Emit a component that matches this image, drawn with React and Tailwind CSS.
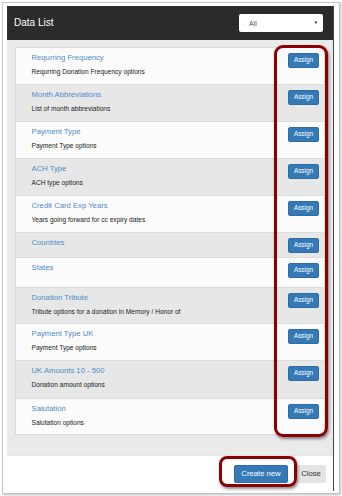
import React from "react";

const rows = [
  { t: "Requrring Frequency", d: "Requrring Donation Frequency options", h: "h-[37px]" },
  { t: "Month Abbreviations", d: "List of month abbreviations", h: "h-[37px]" },
  { t: "Payment Type", d: "Payment Type options", h: "h-[37px]" },
  { t: "ACH Type", d: "ACH type options", h: "h-[37px]" },
  { t: "Credit Card Exp Years", d: "Years going forward for cc expiry dates", h: "h-[37px]" },
  { t: "Countries", d: null, h: "h-[25px]" },
  { t: "States", d: null, h: "h-[30px]" },
  { t: "Donation Tribute", d: "Tribute options for a donation in Memory / Honor of", h: "h-[36px]" },
  { t: "Payment Type UK", d: "Payment Type options", h: "h-[37px]" },
  { t: "UK Amounts 10 - 500", d: "Donation amount options", h: "h-[38px]" },
  { t: "Salutation", d: "Salutation options", h: "h-[36px]" },
];

export default function App() {
  return (
    <div
      className="relative w-[342px] h-[496px] bg-white overflow-hidden p-[2px]"
      style={{ fontFamily: '"Liberation Sans", Arial, sans-serif' }}
    >
      <div className="h-[492px] border border-[#c4c4c4] shadow-[1px_1px_2px_rgba(0,0,0,0.25)] pl-[4px] pt-[3px]">
        <div className="w-[327px] h-[485px] flex flex-col border-r border-[#444]">
          {/* header */}
          <div className="h-[34px] bg-[#2b2b2b] flex items-center justify-between pl-[7px] pr-[10px]">
            <span className="text-white text-[10px] leading-none">Data List</span>
            <div className="w-[84px] h-[18px] bg-white rounded-[2px] flex items-center justify-between pl-[10px] pr-[5px]">
              <span className="text-[7px] text-[#555] leading-none">All</span>
              <span className="text-[4.5px] text-[#222] leading-none">▼</span>
            </div>
          </div>
          {/* body */}
          <div className="h-[415px] bg-[#eaeaea] pt-[7px] pl-[7.5px] pr-[8px]">
            <div className="border border-[#dadada] border-b-0">
              {rows.map((r, i) => (
                <div
                  key={i}
                  className={`${r.h} flex justify-between items-start pl-[16px] pr-[5px] pt-[5px] border-b border-[#dcdcdc] ${
                    i % 2 === 0 ? "bg-[#fbfbfb]" : "bg-[#e7e7e7]"
                  }`}
                >
                  <div className="flex flex-col">
                    <span className="text-[7.7px] leading-[10px] text-[#4f8bc8]">{r.t}</span>
                    {r.d && (
                      <span className="text-[6.6px] leading-[9px] mt-[4px] text-[#222]">{r.d}</span>
                    )}
                  </div>
                  <div className="w-[31px] h-[15px] bg-[#337ab7] border border-[#2e6da4] rounded-[2px] flex items-center justify-center text-white text-[6.4px] leading-none shrink-0">
                    Assign
                  </div>
                </div>
              ))}
            </div>
          </div>
          {/* footer */}
          <div className="h-[36px] bg-white border-t border-[#e5e5e5] flex items-center justify-end gap-[8px] pr-[7px]">
            <div className="w-[54px] h-[18px] bg-[#337ab7] border border-[#2e6da4] rounded-[2px] flex items-center justify-center text-white text-[7.7px] leading-none">
              Create new
            </div>
            <div className="w-[30px] h-[18px] bg-[#e4e4e4] rounded-[2px] flex items-center justify-center text-[#333] text-[7.7px] leading-none">
              Close
            </div>
          </div>
        </div>
      </div>

      {/* annotations */}
      <div className="absolute left-[274px] top-[45px] w-[54px] h-[392px] border-[3px] border-[#8b0000] rounded-[9px] shadow-[1px_2px_3px_rgba(0,0,0,0.45)]" />
      <div className="absolute left-[219px] top-[456px] w-[78px] h-[31px] border-[3px] border-[#8b0000] rounded-[8px] shadow-[1px_2px_3px_rgba(0,0,0,0.45)]" />
    </div>
  );
}
